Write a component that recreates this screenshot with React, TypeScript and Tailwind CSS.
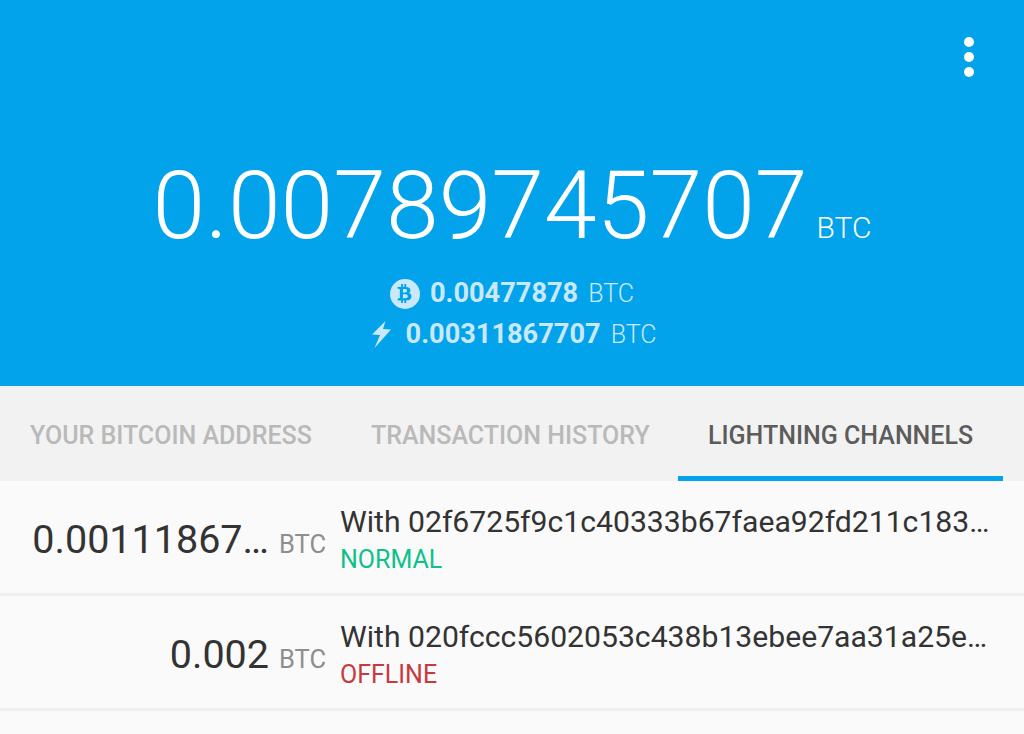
import { FaBtc } from "react-icons/fa";

const channels = [
  {
    amount: "0.00111867…",
    peer: "With 02f6725f9c1c40333b67faea92fd211c183…",
    status: "NORMAL",
    statusColor: "text-[#0fc08a]",
  },
  {
    amount: "0.002",
    peer: "With 020fccc5602053c438b13ebee7aa31a25e…",
    status: "OFFLINE",
    statusColor: "text-[#c8393f]",
  },
];

function BalanceLine({ icon, amount }: { icon: React.ReactNode; amount: string }) {
  return (
    <div className="flex items-center h-[41px] text-[#c9e9fb]">
      {icon}
      <span className="text-[27.2px] font-bold">{amount}</span>
      <span className="text-[25px] font-light ml-[10px]">BTC</span>
    </div>
  );
}

export default function App() {
  return (
    <div className="w-[1024px] h-[734px] overflow-hidden bg-[#fafafa] font-['Roboto',sans-serif]">
      <div className="h-[386px] bg-[#03a3eb] flex flex-col items-center">
        <div className="w-full flex justify-end pt-[37px] pr-[50px]">
          <div className="flex flex-col gap-[5px]">
            <div className="w-[10px] h-[10px] rounded-full bg-white" />
            <div className="w-[10px] h-[10px] rounded-full bg-white" />
            <div className="w-[10px] h-[10px] rounded-full bg-white" />
          </div>
        </div>
        <div className="flex items-baseline mt-[73px] h-[112px] text-white font-light whitespace-nowrap">
          <span className="text-[95px] leading-[112px]">0.00789745707</span>
          <span className="text-[30px] ml-[9px]">BTC</span>
        </div>
        <div className="flex flex-col items-center mt-[11px]">
          <BalanceLine
            icon={
              <div className="w-[30px] h-[30px] mr-[10px] rounded-full bg-[#c9e9fb] flex items-center justify-center">
                <FaBtc className="w-[19px] h-[19px] text-[#03a3eb]" />
              </div>
            }
            amount="0.00477878"
          />
          <BalanceLine
            icon={
              <svg viewBox="0 0 19 27" className="w-[19px] h-[27px] ml-[4px] mr-[15px]" fill="currentColor">
                <path d="M13.5 0 L0 13.5 L8 14 L2.5 27 L19 8.5 L11 8 Z" />
              </svg>
            }
            amount="0.00311867707"
          />
        </div>
      </div>

      <div className="h-[95px] bg-[#f2f2f2] flex text-[25px] font-medium whitespace-nowrap">
        <div className="w-[341px] pl-[30px] pt-[31px] text-[#b9b9b9]">YOUR BITCOIN ADDRESS</div>
        <div className="w-[337px] pl-[30px] pt-[31px] text-[#b9b9b9]">TRANSACTION HISTORY</div>
        <div className="w-[325px] pl-[30px] pt-[31px] text-[#5c5c5c] border-b-[5px] border-[#03a3eb]">
          LIGHTNING CHANNELS
        </div>
      </div>

      {channels.map((c) => (
        <div key={c.status} className="h-[115px] flex border-b-[3px] border-[#f0f0f0] whitespace-nowrap">
          <div className="w-[326px] shrink-0 flex justify-end items-baseline pt-[31px]">
            <span className="text-[39.5px] leading-[56px] text-[#333333]">{c.amount}</span>
            <span className="text-[25.5px] ml-[10px] text-[#8e8e8e]">BTC</span>
          </div>
          <div className="ml-[14px] pt-[21px] flex flex-col">
            <span className="text-[30.15px] leading-[40px] text-[#333333]">{c.peer}</span>
            <span className={`text-[25px] leading-[32px] mt-[2px] ${c.statusColor}`}>{c.status}</span>
          </div>
        </div>
      ))}
    </div>
  );
}
